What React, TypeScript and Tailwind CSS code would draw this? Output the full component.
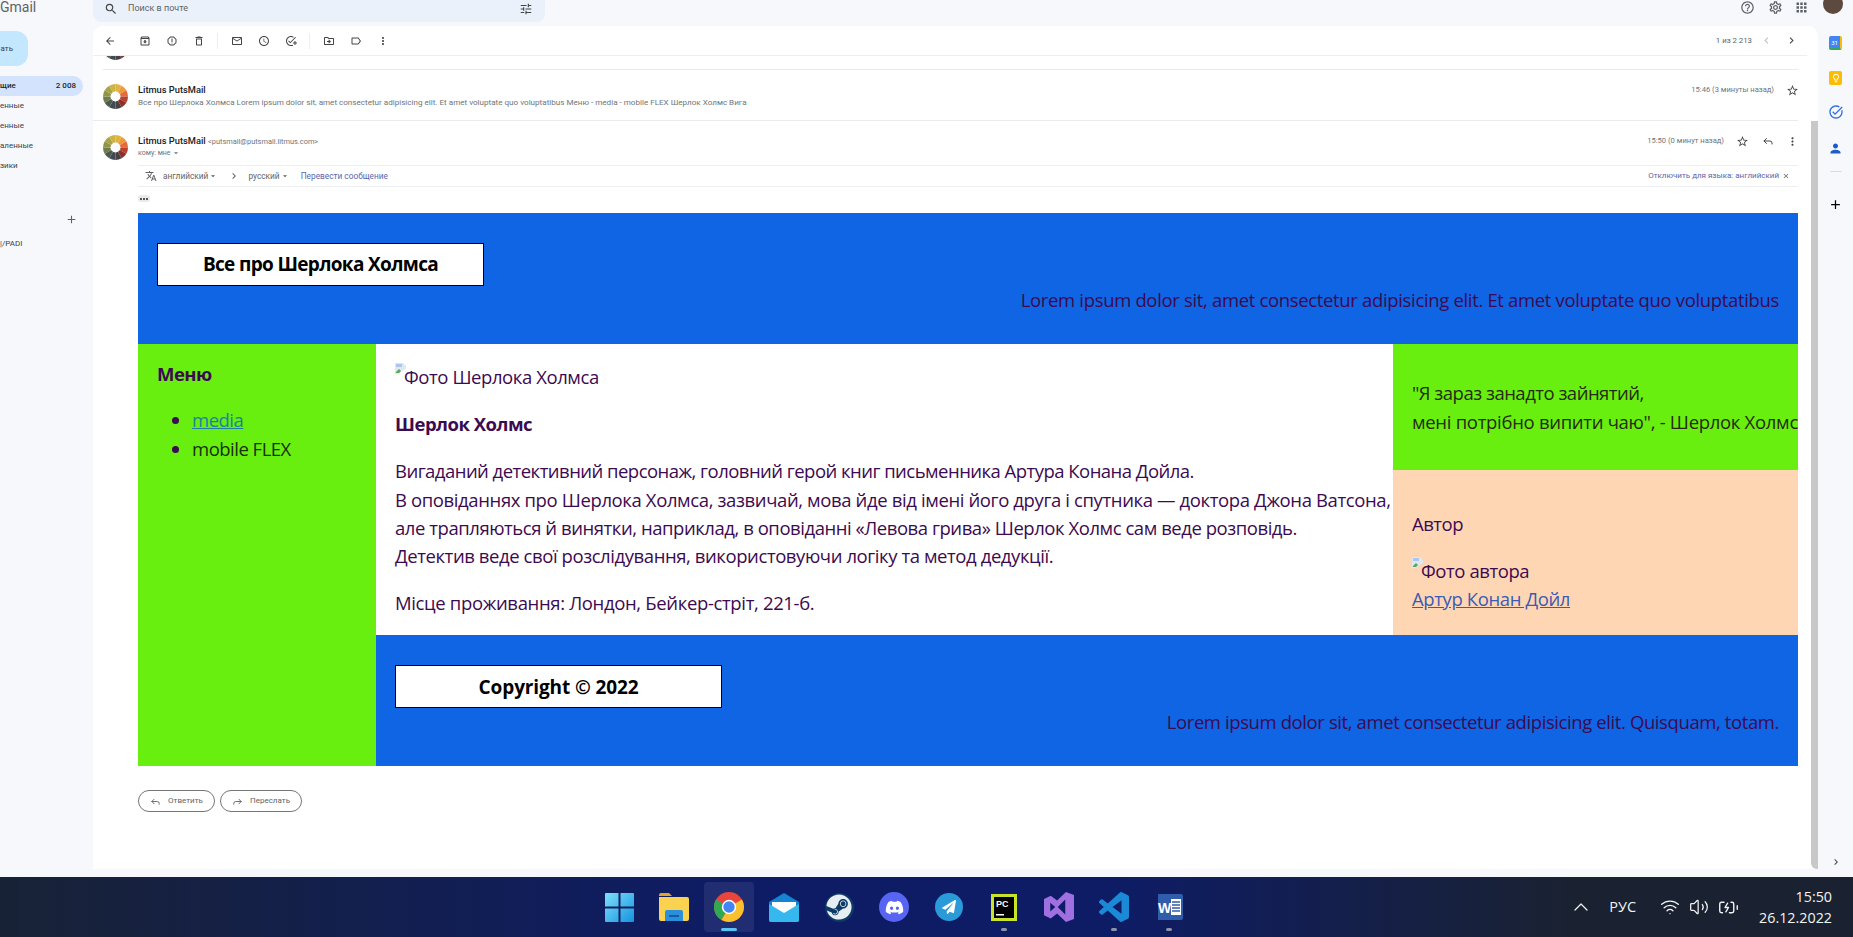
import React from "react";
import {
  MdArrowBack, MdOutlineArchive, MdOutlineReport, MdOutlineDelete, MdOutlineEmail, MdOutlineSchedule,
  MdOutlineAddTask, MdOutlineDriveFileMove, MdOutlineLabel, MdMoreVert, MdSearch, MdOutlineTune,
  MdOutlineHelpOutline, MdOutlineSettings, MdApps, MdStarBorder, MdTranslate, MdChevronLeft,
  MdChevronRight, MdClose, MdArrowDropDown, MdAdd, MdOutlineLightbulb, MdPerson, MdMoreHoriz, MdTaskAlt,
} from "react-icons/md";
import { FaDiscord, FaSteam, FaPaperPlane } from "react-icons/fa";
import { Reply, Forward, ChevronUp, Volume2, Wifi, BatteryCharging } from "lucide-react";

const seg = ["#e3b341", "#ec9a3c", "#e26d3a", "#b8402f", "#8e2f2b", "#4a3f44", "#3f4a52", "#4d5a4e", "#6f7d4c", "#8e9548", "#a9a34a", "#cdb343"];

function Wheel() {
  return (
    <svg width="25" height="25" viewBox="-50 -50 100 100" className="shrink-0">
      {seg.map((c, i) => {
        const a0 = ((i * 30 - 90) * Math.PI) / 180;
        const a1 = (((i + 1) * 30 - 90) * Math.PI) / 180;
        return (
          <path
            key={i}
            d={`M${50 * Math.cos(a0)} ${50 * Math.sin(a0)}A50 50 0 0 1 ${50 * Math.cos(a1)} ${50 * Math.sin(a1)}L0 0Z`}
            fill={c}
          />
        );
      })}
      <circle r="20" fill="#fff" />
    </svg>
  );
}

function Broken() {
  return (
    <svg width="11" height="11" viewBox="0 0 11 11" className="absolute left-0 top-0">
      <path d="M0 0h8l3 3v3L7 8l-3 3H0z" fill="#dfe7f0" />
      <path d="M1 9l3-3 2 2-2 2H1z" fill="#5aa85a" />
      <path d="M1 1h6v3H1z" fill="#a9c7f0" />
    </svg>
  );
}

function ToolBtn({ children, w = "w-[27px]" }: { children: React.ReactNode; w?: string }) {
  return <span className={`flex ${w} shrink-0 items-center justify-center text-[#444746]`}>{children}</span>;
}

function Sep() {
  return <span className="mx-[5px] h-[16px] w-px shrink-0 bg-[#eceef1]" />;
}

function Alt({ children }: { children: React.ReactNode }) {
  return <span className="relative inline-block pl-[9px] tracking-[-0.42px]">{children}<Broken /></span>;
}

function WinLogo() {
  return (
    <svg width="29" height="29" viewBox="0 0 29 29">
      <defs>
        <linearGradient id="w" x1="0" y1="0" x2="1" y2="1">
          <stop offset="0" stopColor="#7fe0fb" />
          <stop offset="1" stopColor="#1493df" />
        </linearGradient>
      </defs>
      <path d="M1 0h12.5v13.5H0V1a1 1 0 0 1 1-1z M15.5 0H28a1 1 0 0 1 1 1v12.5H15.5z M0 15.5h13.5V29H1a1 1 0 0 1-1-1z M15.5 15.5H29V28a1 1 0 0 1-1 1H15.5z" fill="url(#w)" />
    </svg>
  );
}

function Folder() {
  return (
    <svg width="30" height="28" viewBox="0 0 30 28">
      <path d="M0 2a2 2 0 0 1 2-2h8l3 3h-13z" fill="#e2a52a" />
      <path d="M0 4h28a2 2 0 0 1 2 2v20a2 2 0 0 1-2 2H2a2 2 0 0 1-2-2z" fill="#fbd250" />
      <path d="M6 19a2 2 0 0 1 2-2h14a2 2 0 0 1 2 2v9H6z" fill="#2b8fdc" />
      <path d="M10 22h10v2H10z" fill="#0f5fa8" />
    </svg>
  );
}

function Chrome() {
  return (
    <svg width="30" height="30" viewBox="-50 -50 100 100">
      <circle r="50" fill="#e8453c" />
      <path d="M-43.3 -25A50 50 0 0 0 -25 43.3L0 0z" fill="#33a853" />
      <path d="M-25 43.3A50 50 0 0 0 50 0 50 50 0 0 0 43.3 -25L0 0z" fill="#fbc02d" />
      <circle r="24" fill="#fff" />
      <circle r="19" fill="#4285f4" />
    </svg>
  );
}

function MailIcon() {
  return (
    <svg width="30" height="29" viewBox="0 0 30 29">
      <path d="M0 9L15 0l15 9v18a2 2 0 0 1-2 2H2a2 2 0 0 1-2-2z" fill="#1582d2" />
      <path d="M3 9h24v6l-12 7-12-7z" fill="#fff" />
      <path d="M0 11l15 9 15-9v16a2 2 0 0 1-2 2H2a2 2 0 0 1-2-2z" fill="#35b8ee" />
    </svg>
  );
}

function PyCharm() {
  return (
    <svg width="26" height="27" viewBox="0 0 26 27">
      <path d="M0 0h26v27H0z" fill="#c9e22a" />
      <path d="M3 3h20v21H3z" fill="#000" />
      <text x="5" y="13" fontSize="9" fontWeight="700" fill="#fff" fontFamily="Liberation Sans, sans-serif">PC</text>
      <path d="M5 20h8v1.5H5z" fill="#fff" />
    </svg>
  );
}

function WordIcon() {
  return (
    <svg width="28" height="28" viewBox="0 0 28 28">
      <path d="M3 1h23a2 2 0 0 1 2 2v22a2 2 0 0 1-2 2H3z" fill="#2f5cab" />
      <path d="M16 6h10v16H16z" fill="#fff" />
      <path d="M17 9h8M17 12h8M17 15h8M17 18h8" stroke="#2f5cab" strokeWidth="1.3" />
      <text x="3" y="20" fontSize="14" fontWeight="700" fill="#fff" fontFamily="Liberation Sans, sans-serif">W</text>
    </svg>
  );
}

function VSIcon() {
  return (
    <svg width="30" height="30" viewBox="0 0 24 24">
      <path fill="#a06fe0" d="M17.583.063l-7.1 6.7L5.4 2.9 0 5.5v13l5.4 2.6 5.083-3.863 7.1 6.7L24 21.6V2.4zM5 15.5v-7L9 12zm12 2.5l-6-6 6-6z" />
    </svg>
  );
}

function VSCodeIcon() {
  return (
    <svg width="30" height="30" viewBox="0 0 24 24">
      <path fill="#1b8ad6" d="M23.15 2.587L18.21.21a1.494 1.494 0 0 0-1.705.29l-9.46 8.63-4.12-3.128a.999.999 0 0 0-1.276.057L.327 7.261A1 1 0 0 0 .326 8.74L3.899 12 .326 15.26a1 1 0 0 0 .001 1.479L1.65 17.94a.999.999 0 0 0 1.276.057l4.12-3.128 9.46 8.63a1.492 1.492 0 0 0 1.704.29l4.942-2.377A1.5 1.5 0 0 0 24 20.06V3.939a1.5 1.5 0 0 0-.85-1.352zm-5.146 14.861L10.826 12l7.178-5.448v10.896z" />
    </svg>
  );
}

function TaskIcon({ children, dot, active }: { children: React.ReactNode; dot?: boolean; active?: boolean }) {
  return (
    <span className={`relative flex h-[50px] w-[50px] items-center justify-center rounded-[4px] ${active ? "bg-[#ffffff14]" : ""}`}>
      {children}
      {dot && <span className="absolute bottom-[1px] h-[3px] w-[6px] rounded-full bg-[#8d93a6]" />}
      {active && <span className="absolute bottom-[1px] h-[3px] w-[16px] rounded-full bg-[#5cc3f5]" />}
    </span>
  );
}

const nav = ["енные", "енные", "аленные", "зики"];
const metrics = "text-[18.5px] leading-[28.4px] tracking-[-0.5px]";
const body = `text-[#3c0a50] ${metrics}`;
const latin = "text-[#3c0a50] text-[18.5px] leading-[28.4px] text-right";
const boxCls = "flex h-[43px] w-[327px] items-center justify-center border border-black bg-white text-[19px] font-bold text-black";

export default function App() {
  const ui = "font-['Roboto','Liberation_Sans',sans-serif]";
  return (
    <div className={`flex h-[937px] w-[1853px] flex-col overflow-hidden bg-[#f6f8fc] ${ui}`}>
      <div className="flex h-[877px]">
        {/* Left nav */}
        <aside className="flex w-[93px] shrink-0 flex-col overflow-hidden text-[#3c4043]">
          <div className="mt-[-3px] h-[34px] text-[14px] leading-[20px] text-[#5f6368]">Gmail</div>
          <div className="flex h-[35px] w-[28px] items-center justify-end rounded-r-[12px] bg-[#c2e7ff] pr-[15px] text-[8px]">ать</div>
          <div className="mt-[10px] flex h-[20px] w-[83px] items-center justify-between rounded-r-full bg-[#d3e3fd] pr-[7px] text-[8px] font-medium text-[#1f1f1f]">
            <span>щие</span>
            <span>2 008</span>
          </div>
          <div className="flex flex-col text-[8px] leading-[20px]">
            {nav.map((t, i) => (<span key={i}>{t}</span>))}
          </div>
          <div className="mt-[37px] flex justify-end pr-[15px] text-[#5f6368]"><MdAdd size={13} /></div>
          <div className="mt-[12px] text-[8px] leading-[12px]">|/PADI</div>
        </aside>

        {/* Center */}
        <main className="flex min-w-0 flex-1 flex-col">
          <div className="flex h-[26px] shrink-0 items-start">
            <div className="flex h-[22px] w-[452px] items-center rounded-b-[8px] bg-[#eaf1fb] pb-[4px] pl-[11px] pr-[12px] text-[#444746]">
              <MdSearch size={14} />
              <span className="ml-[10px] flex-1 text-[9px] text-[#5f6368]">Поиск в почте</span>
              <MdOutlineTune size={14} />
            </div>
            <div className="ml-auto mr-[-25px] flex h-[14px] items-center text-[#5f6368]">
              <MdOutlineHelpOutline size={15} />
              <span className="ml-[13px]"><MdOutlineSettings size={15} /></span>
              <span className="ml-[11px]"><MdApps size={15} /></span>
              <span className="ml-[14px] mt-[-6px] h-[20px] w-[20px] rounded-full bg-[#5c4a3e]" />
            </div>
          </div>

          <div className="relative flex h-[843px] flex-col overflow-hidden rounded-t-[10px] bg-white">
            {/* toolbar */}
            <div className="mr-[11px] flex h-[30px] shrink-0 items-center border-b border-[#eceef1] pl-[3px]">
              <ToolBtn><MdArrowBack size={12} /></ToolBtn>
              <span className="w-[8px]" />
              <ToolBtn><MdOutlineArchive size={12} /></ToolBtn>
              <ToolBtn><MdOutlineReport size={12} /></ToolBtn>
              <ToolBtn><MdOutlineDelete size={12} /></ToolBtn>
              <Sep />
              <ToolBtn><MdOutlineEmail size={12} /></ToolBtn>
              <ToolBtn><MdOutlineSchedule size={12} /></ToolBtn>
              <ToolBtn><MdOutlineAddTask size={12} /></ToolBtn>
              <Sep />
              <ToolBtn><MdOutlineDriveFileMove size={12} /></ToolBtn>
              <ToolBtn><MdOutlineLabel size={12} /></ToolBtn>
              <ToolBtn><MdMoreVert size={12} /></ToolBtn>
              <span className="ml-auto text-[7.8px] text-[#5f6368]">1 из 2 213</span>
              <span className="ml-[8px] text-[#bdc1c6]"><MdChevronLeft size={13} /></span>
              <span className="ml-[12px] mr-[9px] text-[#444746]"><MdChevronRight size={13} /></span>
            </div>

            {/* sliver of prior row */}
            <div className="ml-[10px] mr-[20px] h-[14px] shrink-0 overflow-hidden border-b border-[#e8eaed]">
              <div className="mt-[-21px]"><Wheel /></div>
            </div>

            {/* collapsed message */}
            <div className="mr-[20px] flex h-[51px] shrink-0 items-start border-b border-[#e8eaed] pl-[10px] pt-[14px]">
              <Wheel />
              <div className="ml-[10px] min-w-0 flex-1 text-[8.08px] leading-[13px]">
                <div className="mt-[-1px] text-[9.3px] font-medium leading-[13px] text-[#202124]">Litmus PutsMail</div>
                <div className="whitespace-nowrap text-[#70757a]">Все про Шерлока Холмса Lorem ipsum dolor sit, amet consectetur adipisicing elit. Et amet voluptate quo voluptatibus Меню - media - mobile FLEX Шерлок Холмс Вига</div>
              </div>
              <span className="mt-[-1px] text-[7.6px] leading-[13px] text-[#70757a]">15:46 (3 минуты назад)</span>
              <span className="ml-[12px] mr-[-1px] text-[#444746]"><MdStarBorder size={13} /></span>
            </div>

            {/* open message */}
            <div className="mr-[20px] flex h-[44px] shrink-0 items-start pl-[10px] pt-[14px]">
              <Wheel />
              <div className="ml-[10px] min-w-0 flex-1">
                <div className="mt-[-1px] text-[9.3px] font-medium leading-[13px] text-[#202124]">
                  Litmus PutsMail <span className="text-[7.4px] font-normal text-[#70757a]">&lt;putsmail@putsmail.litmus.com&gt;</span>
                </div>
                <div className="flex items-center text-[7px] leading-[10px] text-[#70757a]">кому: мне <MdArrowDropDown size={10} /></div>
              </div>
              <span className="mt-[-1px] text-[7.6px] leading-[13px] text-[#70757a]">15:50 (0 минут назад)</span>
              <span className="ml-[12px] text-[#444746]"><MdStarBorder size={13} /></span>
              <span className="ml-[13px] text-[#444746]"><Reply size={12} strokeWidth={2} /></span>
              <span className="ml-[12px] mr-[-1px] text-[#444746]"><MdMoreVert size={13} /></span>
            </div>

            <div className="ml-[45px] mr-[20px] flex h-[22px] shrink-0 items-center border-y border-[#eceef1] pl-[7px] text-[8.3px] text-[#5f6368]">
              <MdTranslate size={12} />
              <span className="ml-[6px] flex items-center">английский <MdArrowDropDown size={10} /></span>
              <span className="ml-[10px]"><MdChevronRight size={12} /></span>
              <span className="ml-[8px] flex items-center">русский <MdArrowDropDown size={10} /></span>
              <span className="ml-[11px] text-[#5a66ad]">Перевести сообщение</span>
              <span className="ml-auto text-[8px] text-[#5a66ad]">Отключить для языка: английский</span>
              <span className="ml-[3px] mr-[8px]"><MdClose size={8} /></span>
            </div>

            <div className="ml-[45px] h-[26px] shrink-0 pt-[8px]">
              <span className="flex h-[7px] w-[12px] items-center justify-center rounded-[3px] bg-[#e8eaed] text-[#333]"><MdMoreHoriz size={12} /></span>
            </div>

            {/* Email body */}
            <div className="ml-[45px] mr-[20px] shrink-0 font-['Open_Sans','Noto_Sans',sans-serif]">
              <header className="bg-[#1065e4] px-[19px] py-[30px]">
                <div className={`${boxCls} tracking-[-0.66px]`}>Все про Шерлока Холмса</div>
                <p className={`${latin} tracking-[-0.34px]`}>Lorem ipsum dolor sit, amet consectetur adipisicing elit. Et amet voluptate quo voluptatibus</p>
              </header>
              <div className="flex h-[422px]">
                <nav className={`w-[238px] shrink-0 bg-[#68ef10] pl-[19px] pt-[16px] ${body}`}>
                  <h3 className="font-bold">Меню</h3>
                  <ul className="mt-[16px] list-disc pl-[35px]">
                    <li className="leading-[29px]"><a className="text-[#1d82a0] underline">media</a></li>
                    <li className="leading-[29px]"><span className="text-[#16300a]">mobile FLEX</span></li>
                  </ul>
                </nav>
                <div className="flex min-w-0 flex-1 flex-col">
                  <div className="flex h-[291px]">
                    <section className={`w-[1017px] shrink-0 pl-[19px] pt-[19px] ${body}`}>
                      <Alt>Фото Шерлока Холмса</Alt>
                      <h3 className="mt-[18px] font-bold">Шерлок Холмс</h3>
                      <p className="mt-[19px] whitespace-nowrap">
                        <span className="tracking-[-0.53px]">Вигаданий детективний персонаж, головний герой книг письменника Артура Конана Дойла.</span><br />
                        <span className="tracking-[-0.38px]">В оповіданнях про Шерлока Холмса, зазвичай, мова йде від імені його друга і спутника — доктора Джона Ватсона,</span><br />
                        <span className="tracking-[-0.45px]">але трапляються й винятки, наприклад, в оповіданні «Левова грива» Шерлок Холмс сам веде розповідь.</span><br />
                        <span className="tracking-[-0.42px]">Детектив веде свої розслідування, використовуючи логіку та метод дедукції.</span>
                      </p>
                      <p className="mt-[18px] tracking-[-0.35px]">Місце проживання: Лондон, Бейкер-стріт, 221-б.</p>
                    </section>
                    <div className="flex min-w-0 flex-1 flex-col">
                      <div className={`h-[126px] overflow-hidden whitespace-nowrap bg-[#68ef10] pl-[19px] pt-[35px] text-[#262b10] ${metrics}`}>
                        "Я зараз занадто зайнятий,<br /><span className="tracking-[-0.3px]">мені потрібно випити чаю", - Шерлок Холмс</span>
                      </div>
                      <div className={`flex-1 bg-[#ffd6b3] pl-[19px] pt-[40px] ${body}`}>
                        <div>Автор</div>
                        <div className="mt-[18px]"><Alt>Фото автора</Alt></div>
                        <a className="block tracking-[-0.38px] text-[#3b5bb5] underline">Артур Конан Дойл</a>
                      </div>
                    </div>
                  </div>
                  <footer className="flex-1 bg-[#1065e4] px-[19px] pt-[30px]">
                    <div className={`${boxCls} tracking-[-0.12px]`}>Copyright © 2022</div>
                    <p className={`${latin} tracking-[-0.4px]`}>Lorem ipsum dolor sit, amet consectetur adipisicing elit. Quisquam, totam.</p>
                  </footer>
                </div>
              </div>
            </div>

            <div className="ml-[45px] mt-[24px] flex shrink-0 gap-[5px] text-[8px] text-[#5f6368]">
              <span className="flex h-[22px] w-[77px] items-center justify-center gap-[7px] rounded-full border border-[#747775]"><Reply size={11} strokeWidth={2} />Ответить</span>
              <span className="flex h-[22px] w-[82px] items-center justify-center gap-[7px] rounded-full border border-[#747775]"><Forward size={11} strokeWidth={2} />Переслать</span>
            </div>

            {/* scrollbar */}
            <div className="absolute bottom-0 right-0 top-[95px] w-[7px] rounded-bl-[6px] bg-[#c8c8c8]" />
          </div>
        </main>

        {/* Right rail */}
        <aside className="flex w-[35px] shrink-0 flex-col items-center pt-[36px]">
          <span className="flex h-[14px] w-[13px] items-center justify-center rounded-[2px] border-b-[2px] border-r-[2px] border-b-[#34a853] border-r-[#fbbc04] bg-[#4285f4] text-[6px] text-white">31</span>
          <span className="mt-[21px] flex h-[14px] w-[13px] items-center justify-center rounded-[2px] bg-[#fbbc04] text-white"><MdOutlineLightbulb size={10} /></span>
          <span className="mt-[19px] text-[#2f6fe0]"><MdTaskAlt size={16} /></span>
          <span className="mt-[21px] text-[#1a5dc9]"><MdPerson size={15} /></span>
          <span className="mt-[15px] h-px w-[12px] bg-[#dadce0]" />
          <span className="mt-[25px] text-black"><MdAdd size={15} /></span>
          <span className="mt-[644px] text-[#444746]"><MdChevronRight size={12} /></span>
        </aside>
      </div>

      {/* Taskbar */}
      <footer className="flex h-[60px] items-center bg-[linear-gradient(90deg,#182236_0%,#0e1c66_40%,#0e1c66_60%,#1a2231_85%)] text-[#f3f3f3]">
        <div className="ml-[594px] flex items-center gap-[5px]">
          <TaskIcon><WinLogo /></TaskIcon>
          <TaskIcon><Folder /></TaskIcon>
          <TaskIcon active><Chrome /></TaskIcon>
          <TaskIcon><MailIcon /></TaskIcon>
          <TaskIcon><span className="flex h-[29px] w-[29px] items-center justify-center rounded-full bg-[#0d3a66]"><FaSteam size={26} className="text-[#e6edf3]" /></span></TaskIcon>
          <TaskIcon><span className="flex h-[30px] w-[30px] items-center justify-center rounded-full bg-[#5865f2]"><FaDiscord size={19} className="text-white" /></span></TaskIcon>
          <TaskIcon><span className="flex h-[28px] w-[28px] items-center justify-center rounded-full bg-[#2a9bd8]"><FaPaperPlane size={14} className="text-white" /></span></TaskIcon>
          <TaskIcon dot><PyCharm /></TaskIcon>
          <TaskIcon><VSIcon /></TaskIcon>
          <TaskIcon dot><VSCodeIcon /></TaskIcon>
          <TaskIcon dot><WordIcon /></TaskIcon>
        </div>
        <div className="ml-auto flex items-center pr-[21px] font-['Open_Sans',sans-serif]">
          <ChevronUp size={24} strokeWidth={1.2} />
          <span className="ml-[16px] text-[14.5px]">РУС</span>
          <span className="ml-[24px]"><Wifi size={20} strokeWidth={1.6} /></span>
          <span className="ml-[9px]"><Volume2 size={20} strokeWidth={1.5} /></span>
          <span className="ml-[9px]"><BatteryCharging size={21} strokeWidth={1.6} /></span>
          <span className="ml-[20px] flex flex-col items-end text-[14.3px] leading-[21px]"><span>15:50</span><span>26.12.2022</span></span>
        </div>
      </footer>
    </div>
  );
}
